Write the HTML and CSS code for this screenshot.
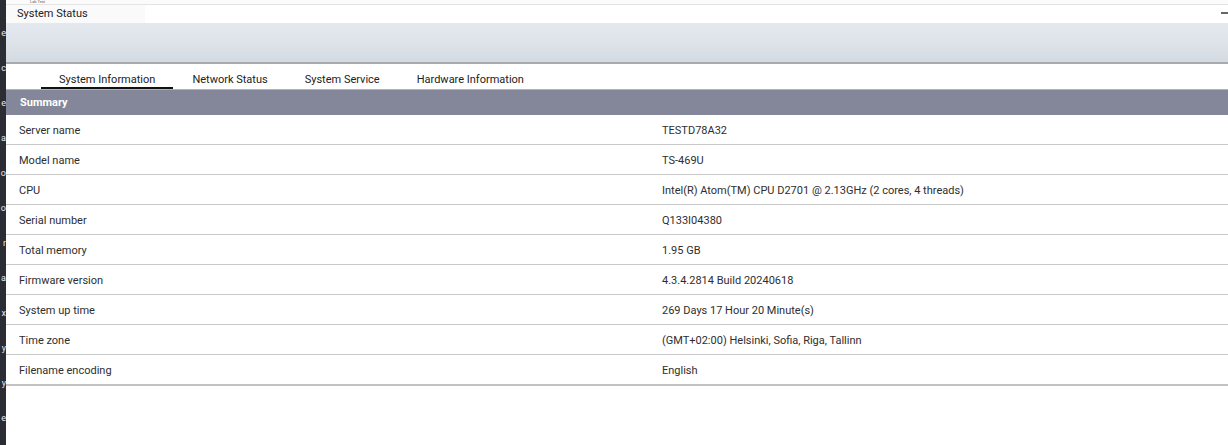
FILE: index.html
```html
<!DOCTYPE html>
<html>
<head>
<meta charset="utf-8">
<link rel="stylesheet" href="styles.css">
</head>
<body>
<div class="screen">
  <div class="desk">
    <span>e</span><span>c</span><span>e</span><span>a</span><span>o</span><span>o</span><span>r</span><span>a</span><span>x</span><span>y</span><span>y</span><span>e</span>
  </div>
  <div class="window">
    <div class="topstrip"><span class="behind">Lab Test</span></div>
    <div class="titlebar">
      <span class="title">System Status</span>
      <span class="minimize"></span>
    </div>
    <div class="banner"></div>
    <div class="tabs">
      <div class="tab active">System Information</div>
      <div class="tab">Network Status</div>
      <div class="tab">System Service</div>
      <div class="tab">Hardware Information</div>
    </div>
    <div class="section">Summary</div>
    <div class="table">
      <div class="row"><div class="label">Server name</div><div class="value">TESTD78A32</div></div>
      <div class="row"><div class="label">Model name</div><div class="value">TS-469U</div></div>
      <div class="row"><div class="label">CPU</div><div class="value">Intel(R) Atom(TM) CPU D2701 @ 2.13GHz (2 cores, 4 threads)</div></div>
      <div class="row"><div class="label">Serial number</div><div class="value">Q133I04380</div></div>
      <div class="row"><div class="label">Total memory</div><div class="value">1.95 GB</div></div>
      <div class="row"><div class="label">Firmware version</div><div class="value">4.3.4.2814 Build 20240618</div></div>
      <div class="row"><div class="label">System up time</div><div class="value">269 Days 17 Hour 20 Minute(s)</div></div>
      <div class="row"><div class="label">Time zone</div><div class="value">(GMT+02:00) Helsinki, Sofia, Riga, Tallinn</div></div>
      <div class="row last"><div class="label">Filename encoding</div><div class="value">English</div></div>
    </div>
  </div>
</div>
</body>
</html>
```
FILE: styles.css
```css
html, body {
  margin: 0;
  padding: 0;
  width: 1228px;
  height: 445px;
  overflow: hidden;
  background: #ffffff;
  font-family: Roboto, "Liberation Sans", sans-serif;
  font-size: 11px;
  color: #2e2e2e;
}

.screen {
  display: flex;
  height: 445px;
}

.desk {
  width: 6px;
  flex: none;
  background: #2c2c34;
  display: flex;
  flex-direction: column;
  align-items: flex-end;
  overflow: hidden;
  padding-top: 27px;
  gap: 23px;
  box-sizing: border-box;
}

.desk span {
  display: block;
  height: 12px;
  line-height: 12px;
  font-size: 9px;
  color: #e8e8ec;
}

.window {
  flex: 1;
  display: flex;
  flex-direction: column;
  background: #ffffff;
  min-width: 0;
}

.topstrip {
  height: 4px;
  background: #fbfbfb;
  border-bottom: 1px solid #e4e4e4;
}

.behind {
  display: block;
  margin-left: 24px;
  font-size: 4px;
  line-height: 4px;
  color: #666;
}

.titlebar {
  height: 18px;
  display: flex;
  align-items: flex-start;
  justify-content: space-between;
  background: linear-gradient(to right, #fafafa 0, #fafafa 139px, #ffffff 139px);
}

.title {
  padding-left: 11px;
  line-height: 18px;
  font-size: 11px;
  color: #222;
}

.minimize {
  width: 7px;
  height: 2px;
  background: #666;
  margin-top: 7px;
}

.banner {
  height: 39px;
  background: linear-gradient(to bottom, #e4e9ef 0%, #dde3e9 50%, #d4dae1 100%);
  border-bottom: 2px solid #a7abaf;
}

.tabs {
  height: 25px;
  display: flex;
  padding-left: 35px;
  border-bottom: 1px solid #b3b3b3;
}

.tab {
  padding: 3px 18px 0 18px;
  line-height: 26px;
  height: 21px;
  color: #222;
  margin-right: 1px;
}

.tab.active {
  border-bottom: 2px solid #111;
  height: 20px;
}

.section {
  height: 25px;
  line-height: 26px;
  background: #838799;
  color: #ffffff;
  font-weight: bold;
  padding-left: 14px;
}

.table {
  display: flex;
  flex-direction: column;
}

.row {
  display: grid;
  grid-template-columns: 643px 1fr;
  height: 28px;
  padding-top: 1px;
  line-height: 30px;
  border-bottom: 1px solid #c9c9c9;
  padding-left: 13px;
}

.row.last {
  border-bottom: 2px solid #c2c2c2;
}

.label, .value {
  color: #2e2e2e;
}
```
